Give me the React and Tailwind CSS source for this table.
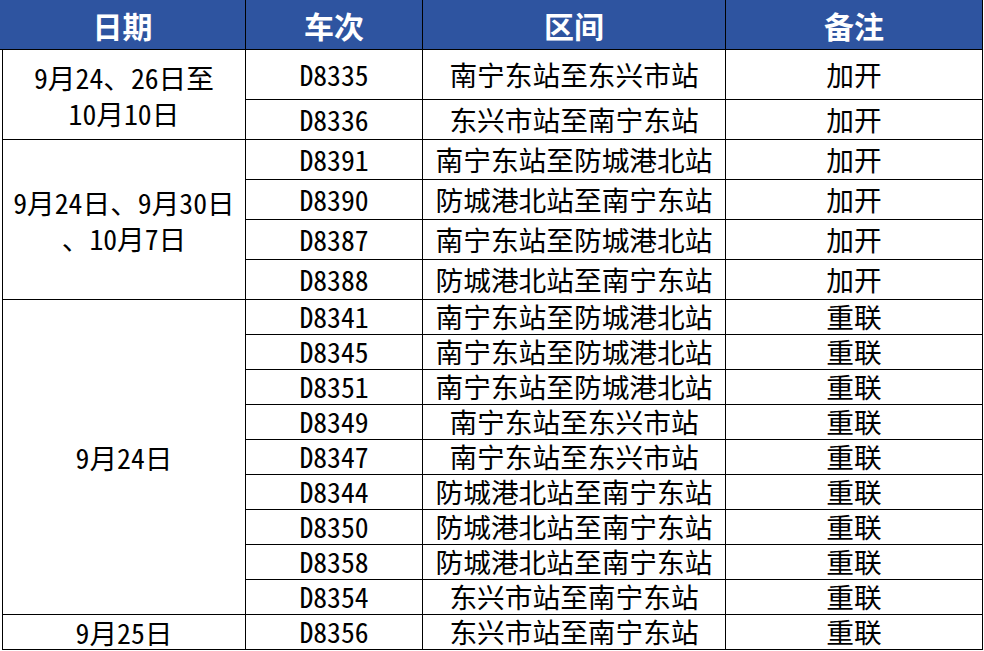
const rows = [
  { date: ["9月24、26日至", "10月10日"], span: "row-span-2", trains: [["D8335", "南宁东站至东兴市站", "加开"], ["D8336", "东兴市站至南宁东站", "加开"]] },
  {
    date: ["9月24日、9月30日", "、10月7日"],
    span: "row-span-4",
    trains: [
      ["D8391", "南宁东站至防城港北站", "加开"],
      ["D8390", "防城港北站至南宁东站", "加开"],
      ["D8387", "南宁东站至防城港北站", "加开"],
      ["D8388", "防城港北站至南宁东站", "加开"],
    ],
  },
  {
    date: ["9月24日"],
    span: "row-span-9",
    trains: [
      ["D8341", "南宁东站至防城港北站", "重联"],
      ["D8345", "南宁东站至防城港北站", "重联"],
      ["D8351", "南宁东站至防城港北站", "重联"],
      ["D8349", "南宁东站至东兴市站", "重联"],
      ["D8347", "南宁东站至东兴市站", "重联"],
      ["D8344", "防城港北站至南宁东站", "重联"],
      ["D8350", "防城港北站至南宁东站", "重联"],
      ["D8358", "防城港北站至南宁东站", "重联"],
      ["D8354", "东兴市站至南宁东站", "重联"],
    ],
  },
  { date: ["9月25日"], span: "row-span-1", trains: [["D8356", "东兴市站至南宁东站", "重联"]] },
];

const cell = "flex items-center justify-center border-b border-r border-black text-center";

export default function App() {
  return (
    <div
      className="h-[651px] w-[984px] overflow-hidden bg-white pl-[2px] text-[27.7px] leading-none text-black"
      style={{ fontFamily: '"Noto Sans Mono CJK SC", "Noto Sans CJK SC", sans-serif' }}
    >
      <div className="grid grid-cols-[244px_177px_303px_257px] grid-rows-[50px_50px_repeat(5,40px)_repeat(10,35px)]">
        {["日期", "车次", "区间", "备注"].map((h, i) => (
          <div
            key={h}
            className={`${cell} bg-[#2e54a0] text-[30px] font-bold text-white ${i === 0 ? "-ml-[2px]" : ""}`}
          >
            {h}
          </div>
        ))}

        {rows.map((group) =>
          group.trains.map((t, i) => (
            <div key={t[0]} className="contents">
              {i === 0 && (
                <div className={`${cell} ${group.span} border-l whitespace-nowrap leading-[36px]`}>
                  <div>
                    {group.date.map((line) => (
                      <div key={line}>{line}</div>
                    ))}
                  </div>
                </div>
              )}
              <div className={`${cell} col-start-2`}>{t[0]}</div>
              <div className={cell}>{t[1]}</div>
              <div className={cell}>{t[2]}</div>
            </div>
          ))
        )}
      </div>
    </div>
  );
}
